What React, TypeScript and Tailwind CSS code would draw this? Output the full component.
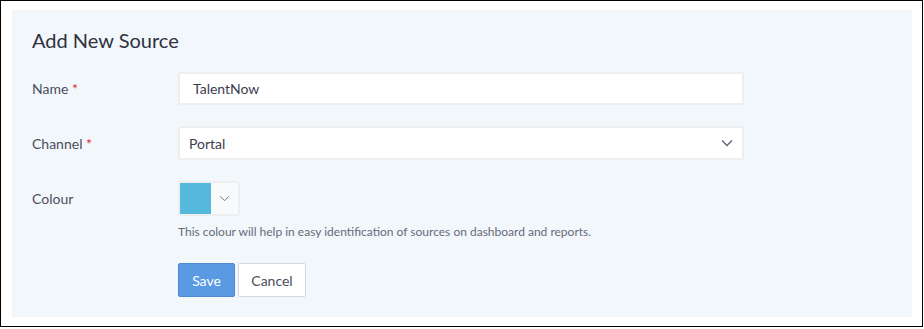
import React from "react";

const font = { fontFamily: "Lato, 'Open Sans', sans-serif" };

function Chevron({ w = 12, h = 8, sw = 1.3 }: { w?: number; h?: number; sw?: number }) {
  return (
    <svg width={w} height={h} viewBox="0 0 12 8" fill="none">
      <path d="M1 1.5 L6 6.5 L11 1.5" stroke="#5a6475" strokeWidth={sw} />
    </svg>
  );
}

export default function App() {
  return (
    <div className="bg-white w-[924px] h-[329px]" style={font}>
      <div className="w-[923px] h-[327px] border border-black pt-[9px] pl-[11px] pr-[10px] pb-[9px]">
        <div className="w-[900px] h-[307px] bg-[#f2f7fb] pl-[20px] pt-[17px]">
          <h1 className="text-[20px] leading-[26px] text-[#2f3140]">Add New Source</h1>
          <div className="mt-[19px] flex items-center h-[33px]">
            <div className="w-[146px] text-[14px] text-[#4b4d5c]">
              Name <span className="text-[#e0203c]">*</span>
            </div>
            <div className="w-[566px] h-[33px] bg-white border-2 border-[#eceef0] rounded-[2px] flex items-center pl-[13px] text-[14px] text-[#3b3d4c]">
              TalentNow
            </div>
          </div>
          <div className="mt-[21px] flex items-center h-[34px]">
            <div className="w-[146px] text-[14px] text-[#4b4d5c]">
              Channel <span className="text-[#e0203c]">*</span>
            </div>
            <div className="w-[566px] h-[34px] bg-white border-2 border-[#eceef0] rounded-[2px] flex items-center justify-between pl-[9px] pr-[9px] text-[14px] text-[#3b3d4c]">
              <span>Portal</span>
              <Chevron />
            </div>
          </div>
          <div className="mt-[21px] flex">
            <div className="w-[146px] text-[14px] text-[#4b4d5c] pt-[7px]">Colour</div>
            <div className="flex flex-col">
              <div className="w-[62px] h-[35px] border-2 border-[#eceef0] rounded-[3px] bg-[#f9fafb] flex">
                <div className="w-[31px] h-full bg-[#55b9dd]" />
                <div className="flex-1 flex items-center justify-center">
                  <Chevron w={11} h={7} sw={1} />
                </div>
              </div>
              <div className="mt-[8px] text-[12px] leading-[16px] text-[#666a7c]">
                This colour will help in easy identification of sources on dashboard and reports.
              </div>
              <div className="mt-[23px] flex gap-[3px]">
                <button className="w-[57px] h-[34px] bg-[#5a99e3] border border-[#4c8ad6] rounded-[2px] text-white text-[14px]">
                  Save
                </button>
                <button className="w-[68px] h-[34px] bg-white border border-[#d3d8e0] rounded-[2px] text-[#4b4d5c] text-[14px]">
                  Cancel
                </button>
              </div>
            </div>
          </div>
        </div>
      </div>
    </div>
  );
}
